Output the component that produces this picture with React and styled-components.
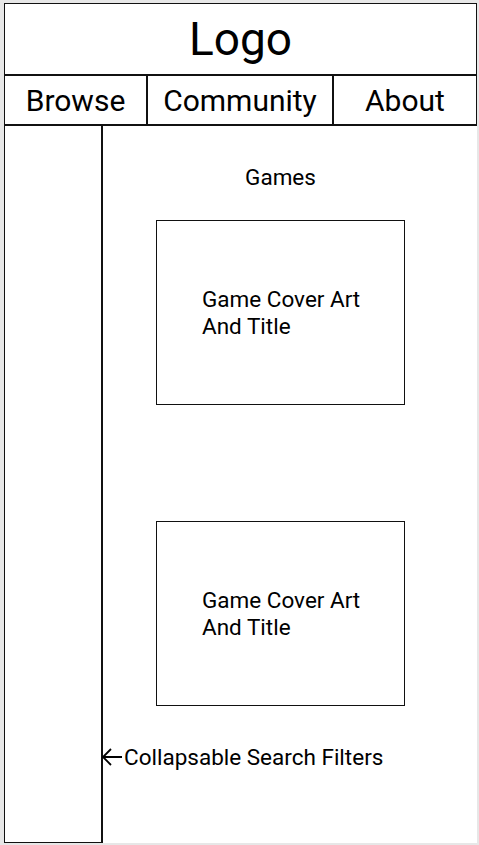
import React from "react";
import styled, { createGlobalStyle } from "styled-components";

const Global = createGlobalStyle`
  html, body { margin: 0; padding: 0; background: #e7e7e7; }
  body { font-family: Roboto, "Liberation Sans", sans-serif; color: #000; }
  * { box-sizing: border-box; }
`;

const Frame = styled.div`
  margin: 3px 0 0 4px;
  width: 473px;
  height: 840px;
  background: #fff;
  display: flex;
  flex-direction: column;
`;

const Header = styled.header`
  height: 71px;
  border: 1px solid #111;
  border-bottom: none;
  display: flex;
  align-items: center;
  justify-content: center;
  font-size: 46px;
  line-height: 1;
`;

const Nav = styled.nav`
  height: 52px;
  display: grid;
  grid-template-columns: 141px 186px 1fr;
  border: 2px solid #111;
  border-left-width: 1px;
  border-right-width: 1px;
`;

const NavItem = styled.div`
  display: flex;
  align-items: center;
  justify-content: center;
  font-size: 30px;
  border-left: ${(p) => (p.$first ? "none" : "2px solid #111")};
`;

const Body = styled.div`
  flex: 1;
  display: flex;
`;

const Sidebar = styled.aside`
  width: 99px;
  border: 1px solid #111;
  border-top: none;
  border-right-width: 2px;
`;

const Main = styled.main`
  flex: 1;
  display: flex;
  flex-direction: column;
  padding-top: 39px;
`;

const Column = styled.div`
  margin-left: 53px;
  width: 249px;
  display: flex;
  flex-direction: column;
`;

const Title = styled.div`
  text-align: center;
  font-size: 22.5px;
  line-height: 24px;
  margin-bottom: 31px;
`;

const Card = styled.div`
  height: 185px;
  border: 1px solid #111;
  display: flex;
  align-items: center;
  padding-left: 45px;
  font-size: 22.5px;
  line-height: 27px;
  margin-bottom: ${(p) => p.$gap}px;
`;

const Note = styled.div`
  display: flex;
  align-items: center;
  font-size: 22.5px;
  line-height: 24px;
  margin-left: -2px;
`;

const Arrow = styled.svg`
  width: 22px;
  height: 20px;
  margin-right: 1px;
`;

export default function App() {
  return (
    <>
      <Global />
      <Frame>
        <Header>Logo</Header>
        <Nav>
          <NavItem $first>Browse</NavItem>
          <NavItem>Community</NavItem>
          <NavItem>About</NavItem>
        </Nav>
        <Body>
          <Sidebar />
          <Main>
            <Column>
              <Title>Games</Title>
              <Card $gap={116}>
                <div>Game Cover Art<br />And Title</div>
              </Card>
              <Card $gap={39}>
                <div>Game Cover Art<br />And Title</div>
              </Card>
            </Column>
            <Note>
              <Arrow viewBox="0 0 22 20">
                <path d="M21 10H2M10 2L2 10L10 18" fill="none" stroke="#000" strokeWidth="1.8" />
              </Arrow>
              Collapsable Search Filters
            </Note>
          </Main>
        </Body>
      </Frame>
    </>
  );
}
